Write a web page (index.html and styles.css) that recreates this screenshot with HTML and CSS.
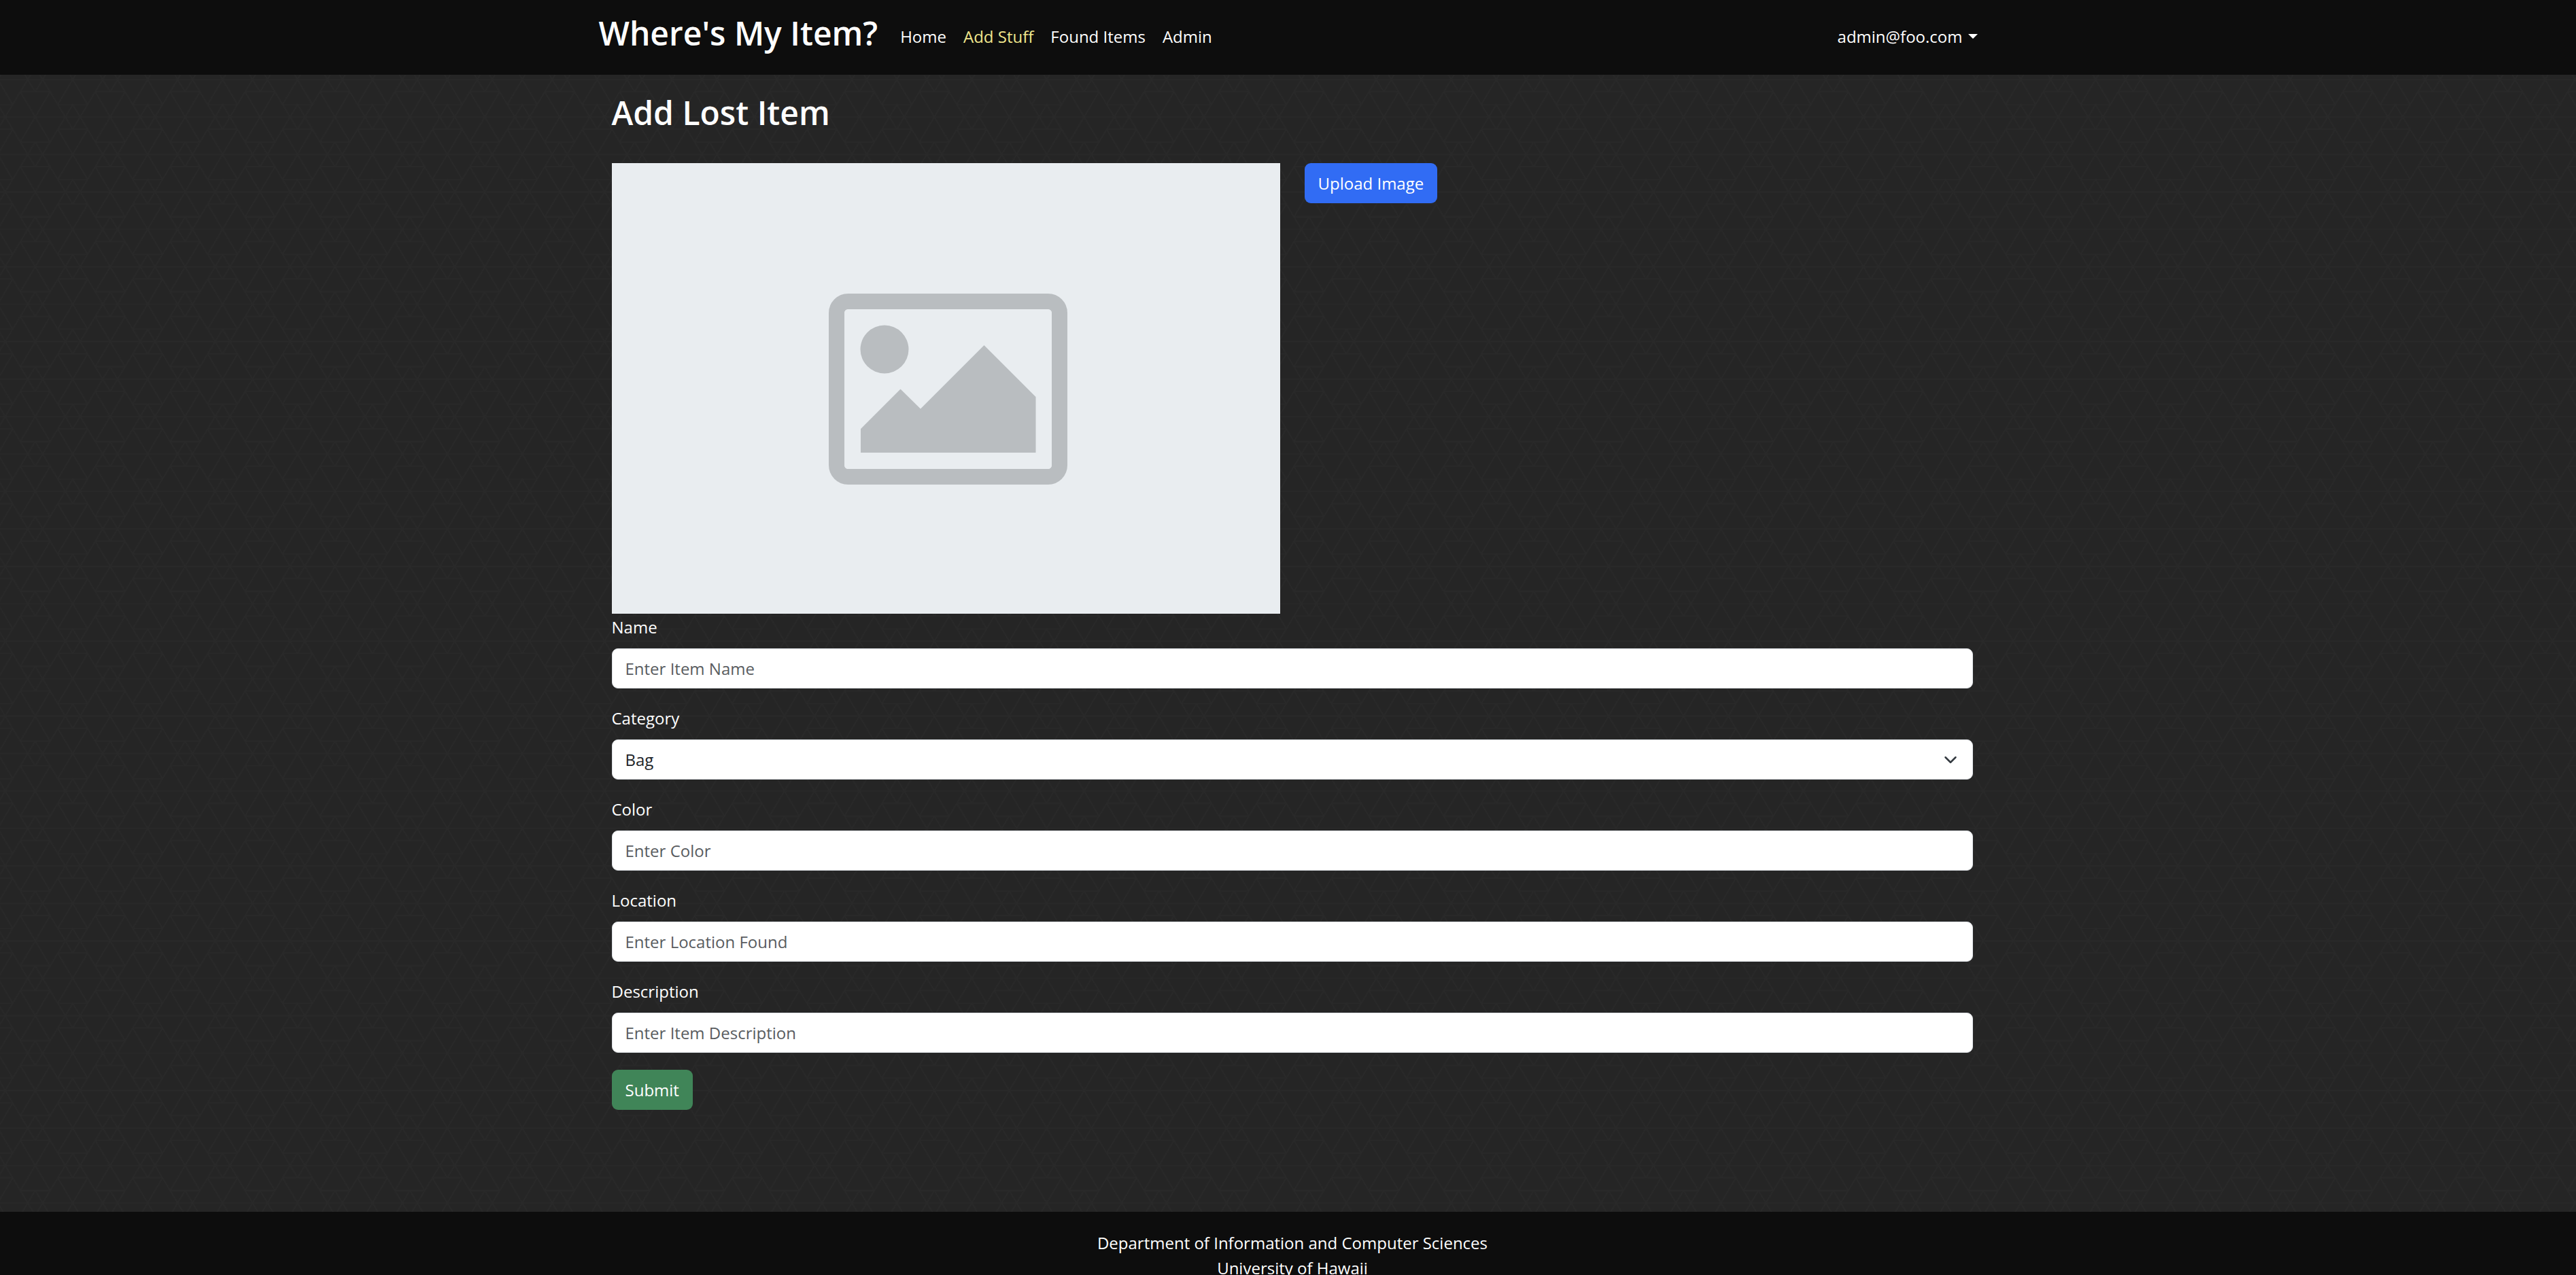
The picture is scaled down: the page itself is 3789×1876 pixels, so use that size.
FILE: index.html
```html
<!DOCTYPE html>
<html lang="en">
<head>
<meta charset="utf-8">
<title>Where's My Item?</title>
<link rel="stylesheet" href="styles.css">
</head>
<body>
<header class="navbar">
  <div class="navbar-inner">
    <a class="brand" href="#">Where's My Item?</a>
    <nav class="nav">
      <a class="nav-link" href="#">Home</a>
      <a class="nav-link active" href="#">Add Stuff</a>
      <a class="nav-link" href="#">Found Items</a>
      <a class="nav-link" href="#">Admin</a>
    </nav>
    <button class="user-menu" type="button">admin@foo.com<span class="caret"></span></button>
  </div>
</header>
<main class="content">
  <h1 class="title">Add Lost Item</h1>
  <div class="upload">
    <div class="preview">
      <svg class="preview-icon" viewBox="0 0 351 281" role="img" aria-label="No image">
        <rect x="11.5" y="11.5" width="328" height="258" rx="17" fill="none" stroke="#b9bdc0" stroke-width="23"/>
        <rect x="23" y="23" width="305" height="235" rx="6" fill="#e9edf0"/>
        <circle cx="82" cy="82" r="35.5" fill="#b9bdc0"/>
        <path d="M47 199l58.500-58.500 29.500 29 93.500-93.500 76 76v82H47z" fill="#b9bdc0"/>
      </svg>
    </div>
    <button class="btn btn-primary" type="button">Upload Image</button>
  </div>
  <form class="form">
    <div class="field">
      <label class="label" for="name">Name</label>
      <input class="control" id="name" type="text" placeholder="Enter Item Name">
    </div>
    <div class="field">
      <label class="label" for="category">Category</label>
      <select class="control select" id="category"><option>Bag</option></select>
    </div>
    <div class="field">
      <label class="label" for="color">Color</label>
      <input class="control" id="color" type="text" placeholder="Enter Color">
    </div>
    <div class="field">
      <label class="label" for="location">Location</label>
      <input class="control" id="location" type="text" placeholder="Enter Location Found">
    </div>
    <div class="field">
      <label class="label" for="description">Description</label>
      <input class="control" id="description" type="text" placeholder="Enter Item Description">
    </div>
    <button class="btn btn-success" type="submit">Submit</button>
  </form>
</main>
<footer class="footer">
  <div>Department of Information and Computer Sciences</div>
  <div>University of Hawaii</div>
</footer>
</body>
</html>
```

FILE: styles.css
```css
* {
  box-sizing: border-box;
}

body {
  margin: 0;
  color: #fff;
  font: 24px/37px "Open Sans", "Noto Sans", sans-serif;
  background-color: #252525;
  /* triangular line pattern, five repeats per tile */
  background-image: url("data:image/svg+xml,%3Csvg xmlns='http://www.w3.org/2000/svg' width='551' height='551'%3E%3Cdefs%3E%3Cpattern id='p' width='110.2' height='110.2' patternUnits='userSpaceOnUse'%3E%3Cg fill='none' stroke='%23292929' stroke-width='1.6'%3E%3Cpath d='M0 0H110.2M0 55.1H110.2M0 110.2H110.2M33 18H77M33 92H77M0 37H22M88 37H110.2M0 73H22M88 73H110.2'/%3E%3Cpath d='M0 0L22 37M110.2 0L88 37M0 110.2L22 73M110.2 110.2L88 73M55.1 55.1L33 18M55.1 55.1L77 18M55.1 55.1L33 92M55.1 55.1L77 92'/%3E%3Cpath d='M0 37L44 110.2M110.2 37L66 110.2M55.1 92L44 110.2M55.1 92L66 110.2M0 73L44 0M110.2 73L66 0M55.1 18L44 0M55.1 18L66 0'/%3E%3C/g%3E%3C/pattern%3E%3C/defs%3E%3Crect width='551' height='551' fill='url(%23p)'/%3E%3C/svg%3E");
  background-position: 107px 117px;
}

a {
  color: inherit;
  text-decoration: none;
}

button,
input,
select {
  font: inherit;
}

.navbar {
  padding: 0 24px;
  background: #0d0d0d;
}

.navbar-inner {
  display: flex;
  align-items: center;
  max-width: 2028px;
  height: 110px;
  margin: 0 auto;
  padding-bottom: 12px;
}

.brand {
  font-size: 48px;
  font-weight: 600;
  line-height: 74px;
}

.nav {
  display: flex;
  gap: 25px;
  margin: 8px auto 0 33px;
}

.nav-link.active {
  color: #f0e68c;
}

.user-menu {
  display: flex;
  align-items: center;
  gap: 8px;
  margin-top: 8px;
  padding: 0;
  border: 0;
  background: none;
  color: inherit;
}

.caret {
  border: 7px solid transparent;
  border-top-color: currentColor;
  border-bottom: 0;
}

.content {
  max-width: 2028px;
  margin: 0 auto;
  padding: 22px 7px 150px 19px;
}

.title {
  margin: 0 0 40px;
  font-size: 48px;
  font-weight: 600;
  line-height: 68px;
}

.upload {
  display: flex;
  align-items: flex-start;
  gap: 36px;
}

.preview {
  display: grid;
  place-items: center;
  width: 983px;
  height: 663px;
  padding: 2px 0 0 6px;
  background: #e9edf0;
}

.preview-icon {
  width: 351px;
}

.btn {
  height: 59px;
  padding: 0 20px;
  border: 0;
  border-radius: 9px;
  color: #fff;
}

.btn-primary {
  background: #316cf4;
}

.btn-success {
  background: #408558;
}

.form {
  padding-top: 1px;
}

.field {
  display: flex;
  flex-direction: column;
  gap: 13px;
  margin-bottom: 25px;
}

.control {
  width: 100%;
  height: 59px;
  padding: 0 19px;
  border: 1px solid #dee2e6;
  border-radius: 9px;
  background: #fff;
  color: #212529;
}

.control::placeholder {
  color: #595c5f;
  opacity: 1;
}

.select {
  appearance: none;
  background: #fff url("data:image/svg+xml,%3Csvg xmlns='http://www.w3.org/2000/svg' viewBox='0 0 16 16'%3E%3Cpath fill='none' stroke='%23343a40' stroke-linecap='round' stroke-linejoin='round' stroke-width='2' d='m2 5 6 6 6-6'/%3E%3C/svg%3E") no-repeat right 22px center / 20px 20px;
}

.footer {
  padding: 27px 0 24px 13px;
  background: #0d0d0d;
  text-align: center;
}
```
